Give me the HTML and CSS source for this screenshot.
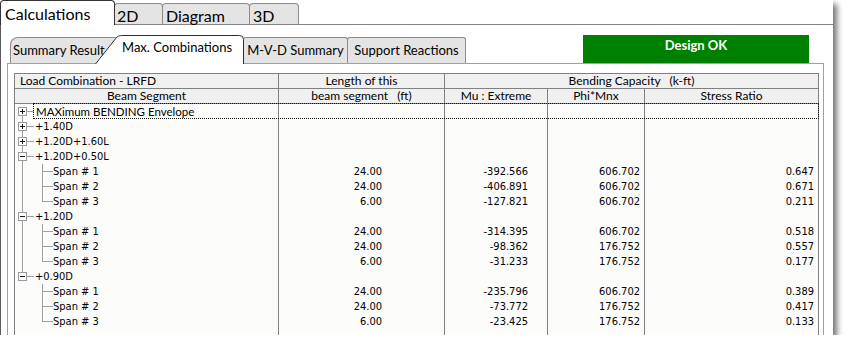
FILE: index.html
```html
<!DOCTYPE html>
<html lang="en">
<head>
  <meta charset="UTF-8">
  <title>Calculations - Max. Combinations</title>
  <link rel="stylesheet" href="styles.css">
</head>
<body>
  <svg class="defs" width="0" height="0">
    <defs>
      <g id="box-plus" shape-rendering="crispEdges">
        <rect x="3.5" y="3.5" width="8" height="8" fill="#fff" stroke="#9a9a9a"/>
        <path d="M5 7.5H10M7.5 5V10" stroke="#1a1a1a"/>
        <path d="M12 7.5H19" stroke="#a0a0a0"/>
      </g>
      <g id="box-minus" shape-rendering="crispEdges">
        <rect x="3.5" y="3.5" width="8" height="8" fill="#fff" stroke="#9a9a9a"/>
        <path d="M5 7.5H10" stroke="#1a1a1a"/>
        <path d="M12 7.5H19" stroke="#a0a0a0"/>
      </g>
      <path id="stem-up" d="M7.5 0V3" fill="none" stroke="#a0a0a0" shape-rendering="crispEdges"/>
      <path id="stem-down" d="M7.5 12V15" fill="none" stroke="#a0a0a0" shape-rendering="crispEdges"/>
      <path id="stem" d="M7.5 0V15" fill="none" stroke="#a0a0a0" shape-rendering="crispEdges"/>
      <path id="branch" d="M27.5 0V15M28 7.5H38" fill="none" stroke="#a0a0a0" shape-rendering="crispEdges"/>
      <path id="branch-end" d="M27.5 0V7.5H38" fill="none" stroke="#a0a0a0" shape-rendering="crispEdges"/>
    </defs>
  </svg>

  <div class="window">
    <div class="main-tabs">
      <div class="main-tab active">Calculations</div>
      <div class="main-tab">2D</div>
      <div class="main-tab">Diagram</div>
      <div class="main-tab">3D</div>
    </div>

    <div class="main-panel">
      <div class="sub-bar">
        <div class="sub-tab first">Summary Result</div>
        <div class="sub-tab active">
          <svg class="tab-shape" width="149" height="29" viewBox="0 0 149 29">
            <path d="M0.5 29L21.5 2.5Q23.5 0.5 26.5 0.5H144.5Q148.5 0.5 148.5 4.5V29" fill="#fff" stroke="#2e2e2e"/>
          </svg>
          <span class="tab-label">Max. Combinations</span>
        </div>
        <div class="sub-tab">M-V-D Summary</div>
        <div class="sub-tab">Support Reactions</div>
        <div class="status">Design OK</div>
      </div>

      <div class="sub-panel">
        <div class="grid">
          <div class="h h-left">Load Combination - LRFD</div>
          <div class="h">Length of this</div>
          <div class="h span3">Bending Capacity&nbsp;&nbsp;&nbsp;(k-ft)</div>
          <div class="h">Beam Segment</div>
          <div class="h">beam segment&nbsp;&nbsp;&nbsp;(ft)</div>
          <div class="h">Mu : Extreme</div>
          <div class="h">Phi*Mnx</div>
          <div class="h">Stress Ratio</div>

          <div class="c tree selected"><svg class="tw" width="20" height="15"><use href="#box-plus"/><use href="#stem-down"/></svg><span class="envelope">MAXimum BENDING Envelope</span><div class="focus"></div></div>
          <div class="c"></div><div class="c"></div><div class="c"></div><div class="c"></div>

          <div class="c tree"><svg class="tw" width="20" height="15"><use href="#box-plus"/><use href="#stem-up"/><use href="#stem-down"/></svg><span>+1.40D</span></div>
          <div class="c"></div><div class="c"></div><div class="c"></div><div class="c"></div>

          <div class="c tree"><svg class="tw" width="20" height="15"><use href="#box-plus"/><use href="#stem-up"/><use href="#stem-down"/></svg><span>+1.20D+1.60L</span></div>
          <div class="c"></div><div class="c"></div><div class="c"></div><div class="c"></div>

          <div class="c tree"><svg class="tw" width="20" height="15"><use href="#box-minus"/><use href="#stem-up"/><use href="#stem-down"/></svg><span>+1.20D+0.50L</span></div>
          <div class="c"></div><div class="c"></div><div class="c"></div><div class="c"></div>

          <div class="c tree"><svg class="tw" width="38" height="15"><use href="#stem"/><use href="#branch"/></svg><span>Span # 1</span></div>
          <div class="c len">24.00</div><div class="c mu">-392.566</div><div class="c phi">606.702</div><div class="c ratio">0.647</div>

          <div class="c tree"><svg class="tw" width="38" height="15"><use href="#stem"/><use href="#branch"/></svg><span>Span # 2</span></div>
          <div class="c len">24.00</div><div class="c mu">-406.891</div><div class="c phi">606.702</div><div class="c ratio">0.671</div>

          <div class="c tree"><svg class="tw" width="38" height="15"><use href="#stem"/><use href="#branch-end"/></svg><span>Span # 3</span></div>
          <div class="c len">6.00</div><div class="c mu">-127.821</div><div class="c phi">606.702</div><div class="c ratio">0.211</div>

          <div class="c tree"><svg class="tw" width="20" height="15"><use href="#box-minus"/><use href="#stem-up"/><use href="#stem-down"/></svg><span>+1.20D</span></div>
          <div class="c"></div><div class="c"></div><div class="c"></div><div class="c"></div>

          <div class="c tree"><svg class="tw" width="38" height="15"><use href="#stem"/><use href="#branch"/></svg><span>Span # 1</span></div>
          <div class="c len">24.00</div><div class="c mu">-314.395</div><div class="c phi">606.702</div><div class="c ratio">0.518</div>

          <div class="c tree"><svg class="tw" width="38" height="15"><use href="#stem"/><use href="#branch"/></svg><span>Span # 2</span></div>
          <div class="c len">24.00</div><div class="c mu">-98.362</div><div class="c phi">176.752</div><div class="c ratio">0.557</div>

          <div class="c tree"><svg class="tw" width="38" height="15"><use href="#stem"/><use href="#branch-end"/></svg><span>Span # 3</span></div>
          <div class="c len">6.00</div><div class="c mu">-31.233</div><div class="c phi">176.752</div><div class="c ratio">0.177</div>

          <div class="c tree"><svg class="tw" width="20" height="15"><use href="#box-minus"/><use href="#stem-up"/></svg><span>+0.90D</span></div>
          <div class="c"></div><div class="c"></div><div class="c"></div><div class="c"></div>

          <div class="c tree"><svg class="tw" width="38" height="15"><use href="#branch"/></svg><span>Span # 1</span></div>
          <div class="c len">24.00</div><div class="c mu">-235.796</div><div class="c phi">606.702</div><div class="c ratio">0.389</div>

          <div class="c tree"><svg class="tw" width="38" height="15"><use href="#branch"/></svg><span>Span # 2</span></div>
          <div class="c len">24.00</div><div class="c mu">-73.772</div><div class="c phi">176.752</div><div class="c ratio">0.417</div>

          <div class="c tree"><svg class="tw" width="38" height="15"><use href="#branch-end"/></svg><span>Span # 3</span></div>
          <div class="c len">6.00</div><div class="c mu">-23.425</div><div class="c phi">176.752</div><div class="c ratio">0.133</div>

          <div class="c"></div><div class="c"></div><div class="c"></div><div class="c"></div><div class="c"></div>
        </div>
      </div>
    </div>
  </div>
</body>
</html>
```

FILE: styles.css
```css
body {
  margin: 0;
  background: #fff;
}

.defs {
  display: block;
  width: 0;
  height: 0;
}

.window {
  width: 833px;
  height: 335px;
  background: #fff;
  box-shadow: 4px 4px 6px rgba(0,0,0,0.55);
  font-family: Lato, "Open Sans", sans-serif;
  color: #000;
  overflow: hidden;
}

/* top tab strip */
.main-tabs {
  display: flex;
  align-items: flex-end;
  height: 24px;
}

.main-tab {
  box-sizing: border-box;
  height: 21px;
  margin-left: -1px;
  padding: 2px 0 0 3px;
  border: 1px solid #8c8c8c;
  border-bottom: none;
  border-radius: 4px 4px 0 0;
  background: #e4e4e4;
  font-size: 16px;
  line-height: 20px;
  white-space: nowrap;
}

.main-tab:nth-child(2) { width: 49px; padding-left: 2px; }
.main-tab:nth-child(3) { width: 88px; }
.main-tab:nth-child(4) { width: 50px; }

.main-tab.active {
  position: relative;
  z-index: 1;
  width: 115px;
  height: 25px;
  margin: 0 0 -1px 0;
  padding: 3px 0 0 4px;
  border-color: #333;
  background: #fff;
}

.main-panel {
  box-sizing: border-box;
  height: 311px;
  border-top: 1px solid #828282;
  border-left: 1px solid #5c5c5c;
  padding: 10px 9px 0 6px;
}

/* second tab strip */
.sub-bar {
  display: flex;
  align-items: flex-end;
  height: 28px;
}

.sub-tab {
  box-sizing: border-box;
  height: 26px;
  margin-left: -1px;
  padding-top: 4px;
  border: 1px solid #8c8c8c;
  border-bottom: none;
  border-radius: 3px 3px 0 0;
  background: #e4e4e4;
  font-size: 13px;
  line-height: 16px;
  text-align: center;
  white-space: nowrap;
  overflow: hidden;
}

.sub-tab.first {
  width: 108px;
  margin-left: 3px;
  padding-left: 2px;
  border-radius: 8px 3px 0 0;
  text-align: left;
}

.sub-tab:nth-child(3) { width: 105px; }
.sub-tab:nth-child(4) { width: 119px; }

.sub-tab.active {
  position: relative;
  z-index: 1;
  width: 149px;
  height: 29px;
  margin: 0 0 -1px -23px;
  padding: 4px 0 0 27px;
  border: none;
  background: transparent;
  text-align: left;
  overflow: visible;
}

.tab-shape {
  position: absolute;
  left: 0;
  top: 0;
}

.tab-label {
  position: relative;
}

.status {
  box-sizing: border-box;
  width: 226px;
  height: 28px;
  margin: 0 15px 0 auto;
  padding-top: 2px;
  background: #008000;
  color: #fff;
  font-size: 13px;
  font-weight: bold;
  line-height: 16px;
  text-align: center;
}

.sub-panel {
  box-sizing: border-box;
  height: 272px;
  border: 1px solid #a0a0a0;
  border-bottom: none;
  padding: 9px 4px 0 6px;
}

/* results grid */
.grid {
  box-sizing: border-box;
  display: grid;
  grid-template-columns: 264px 166px 103px 97px 174px;
  grid-template-rows: 15px 15px repeat(15, 15px) 1fr;
  height: 262px;
  border-left: 1px solid #808080;
  border-top: 1px solid #808080;
}

.h {
  box-sizing: border-box;
  background: #f0f0f0;
  border-right: 1px solid #808080;
  border-bottom: 1px solid #808080;
  font-size: 12px;
  line-height: 14px;
  text-align: center;
  white-space: nowrap;
}

.h-left {
  text-align: left;
  padding-left: 5px;
}

.span3 {
  grid-column: span 3;
}

.c {
  box-sizing: border-box;
  background: #fcfcfa;
  border-right: 1px solid #808080;
  font-family: "DejaVu Sans Condensed", "DejaVu Sans", sans-serif;
  font-stretch: condensed;
  font-size: 11px;
  line-height: 15px;
  text-align: right;
  white-space: nowrap;
}

.tree {
  display: flex;
  text-align: left;
}

.tw {
  display: block;
  flex: none;
}

.envelope {
  margin-left: 1px;
  font-family: Lato, "Open Sans", sans-serif;
  font-stretch: normal;
  font-size: 11.5px;
}

.len { padding-right: 62px; }
.mu { padding-right: 19px; }
.phi { padding-right: 4px; }
.ratio { padding-right: 4px; }

/* keyboard focus rectangle over the selected row */
.selected {
  position: relative;
}

.focus {
  position: absolute;
  left: 18px;
  top: -1px;
  width: 786px;
  height: 16px;
  box-sizing: border-box;
  border: 1px dotted #111;
}
```
